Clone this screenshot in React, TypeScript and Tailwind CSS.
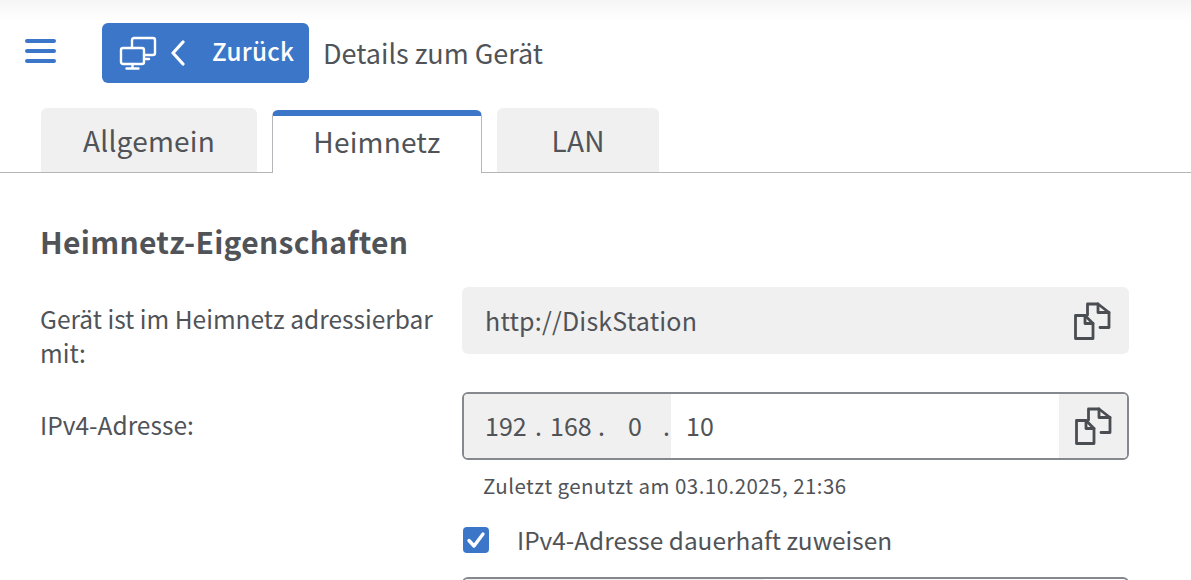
import React from "react";

const font = { fontFamily: '"Noto Sans CJK JP", "Noto Sans", sans-serif' };

function CopyIcon() {
  return (
    <svg width="38" height="38" viewBox="0 0 38 38" fill="none" stroke="#4a4d52" strokeWidth="2.800" strokeLinejoin="round" strokeLinecap="round">
      <path d="M1.500 13.500h9.500l8 8v15h-17.500z" />
      <path d="M11 13.500v8h8" />
      <path d="M13.500 13V2h10.500l11 8.500V25.500h-9" />
      <path d="M24 2v8.500h11" />
    </svg>
  );
}

function Monitors() {
  return (
    <svg width="38" height="34" viewBox="0 0 38 34" fill="none" stroke="#fff" strokeWidth="2.400" strokeLinecap="round" strokeLinejoin="round">
      <path d="M13 12V4a2 2 0 0 1 2-2h19a2 2 0 0 1 2 2v13a2 2 0 0 1-2 2h-9" />
      <rect x="2" y="12" width="23" height="16" rx="2" />
      <path d="M13.500 28v4M7.500 32.500h12M25 23h5" />
    </svg>
  );
}

export default function App() {
  return (
    <div style={font} className="w-full h-[580px] overflow-hidden bg-white text-[#505357]">
      <div className="h-[108px] flex items-start pt-[23px] pl-[25px] bg-gradient-to-b from-[#f6f6f6] to-white to-[20%]">
        <div className="mt-[16px] w-[31px] flex flex-col gap-[6px]">
          <div className="h-[4px] rounded-full bg-[#3b76c9]" />
          <div className="h-[4px] rounded-full bg-[#3b76c9]" />
          <div className="h-[4px] rounded-full bg-[#3b76c9]" />
        </div>
        <div className="ml-[46px] w-[207px] h-[60px] rounded-[6px] bg-[#3b76c9] flex items-center pl-[17px] text-white">
          <Monitors />
          <svg className="ml-[13px]" width="16" height="26" viewBox="0 0 16 26" fill="none" stroke="#fff" strokeWidth="3.200" strokeLinecap="round" strokeLinejoin="round">
            <path d="M13 2 3 13l10 11" />
          </svg>
          <span className="ml-[26px] text-[24.2px] font-medium leading-none tracking-[0.3px] -mt-[3px]">Zurück</span>
        </div>
        <span className="ml-[14px] mt-[11px] text-[27px] leading-[38px]">Details zum Gerät</span>
      </div>

      <div className="h-[64px] flex items-stretch gap-[15px] pl-[41px] border-b border-[#b4b6b9] box-content">
        <div className="w-[216px] rounded-t-[6px] bg-[#f0f0f0] flex items-center justify-center text-[28px] tracking-[0.2px]">Allgemein</div>
        <div className="w-[210px] -mb-px mt-[2px] bg-white rounded-t-[6px] border-x border-[#b4b6b9] border-t-[6px] border-t-[#3b76c9] flex items-center justify-center text-[28px] tracking-[0.2px] pb-[8px]">Heimnetz</div>
        <div className="w-[162px] rounded-t-[6px] bg-[#f0f0f0] flex items-center justify-center text-[28px] tracking-[0.2px]">LAN</div>
      </div>

      <div className="pl-[40px] pr-[62px]">
        <h2 className="mt-[47px] h-[42px] text-[30px] leading-[42px] font-bold tracking-[0.3px]">Heimnetz-Eigenschaften</h2>

        <div className="mt-[25px] flex">
          <div className="w-[422px] pt-[15px] text-[24.5px] leading-[34px]">Gerät ist im Heimnetz adressierbar mit:</div>
          <div className="flex-1 h-[67px] rounded-[6px] bg-[#f0f0f0] flex items-center justify-between pl-[23px] pr-[17px]">
            <span className="text-[25px] tracking-[0.2px]">http://DiskStation</span>
            <CopyIcon />
          </div>
        </div>

        <div className="mt-[22px] flex">
          <div className="w-[422px] pt-[16px] text-[24.5px] leading-[34px]">IPv4-Adresse:</div>
          <div className="flex-1">
            <div className="h-[68px] rounded-[6px] border-2 border-[#85888c] flex items-stretch overflow-hidden text-[25px]">
              <div className="w-[207px] bg-[#f0f0f0] flex items-center pl-[21px]">
                <span className="w-[50px]">192</span>
                <span className="w-[15px]">.</span>
                <span className="w-[48px]">168</span>
                <span className="w-[30px]">.</span>
                <span className="w-[35px]">0</span>
                <span>.</span>
              </div>
              <div className="flex-1 flex items-center pl-[15px]">10</div>
              <div className="w-[68px] bg-[#f0f0f0] flex items-center justify-center pl-[1px]">
                <CopyIcon />
              </div>
            </div>
            <div className="mt-[10px] pl-[21px] text-[20.5px] leading-[30px] tracking-[0.45px]">Zuletzt genutzt am 03.10.2025, 21:36</div>
            <div className="mt-[22px] flex items-center">
              <div className="ml-px w-[26px] h-[26px] rounded-[4px] bg-[#3b76c9] flex items-center justify-center">
                <svg width="20" height="18" viewBox="0 0 20 18" fill="none" stroke="#fff" strokeWidth="3.400" strokeLinecap="round" strokeLinejoin="round">
                  <path d="M3 9.500 8 15 17 3" />
                </svg>
              </div>
              <span className="ml-[28px] text-[24.4px] leading-[36px]">IPv4-Adresse dauerhaft zuweisen</span>
            </div>
            <div className="mt-[19px] h-[68px] rounded-[6px] border-2 border-[#85888c] flex overflow-hidden">
              <div className="w-[300px] bg-[#f0f0f0]" />
            </div>
          </div>
        </div>
      </div>
    </div>
  );
}
